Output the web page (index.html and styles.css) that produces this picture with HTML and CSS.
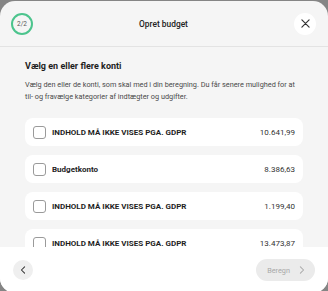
FILE: index.html
```html
<!DOCTYPE html>
<html lang="da">
<head>
<meta charset="UTF-8">
<meta name="viewport" content="width=device-width, initial-scale=1.0">
<title>Opret budget</title>
<link rel="stylesheet" href="styles.css">
</head>
<body>
<div class="modal">
    <header class="modal-header">
        <div class="step">2/2</div>
        <h1 class="modal-title">Opret budget</h1>
        <button class="close-btn" aria-label="Luk">
            <svg width="9" height="9" viewBox="0 0 10 10"><path d="M1 1L9 9M9 1L1 9" stroke="#333" stroke-width="1.3" stroke-linecap="round"/></svg>
        </button>
    </header>

    <!-- Valg af konti -->
    <div class="modal-body">
        <h2 class="section-title">Vælg en eller flere konti</h2>
        <p class="section-text">Vælg den eller de konti, som skal med i din beregning. Du får senere mulighed for at til- og fravælge kategorier af indtægter og udgifter.</p>
        <ul class="account-list">
            <li class="account">
                <span class="check"></span>
                <span class="account-name">INDHOLD MÅ IKKE VISES PGA. GDPR</span>
                <span class="account-amount">10.641,99</span>
            </li>
            <li class="account">
                <span class="check"></span>
                <span class="account-name">Budgetkonto</span>
                <span class="account-amount">8.386,63</span>
            </li>
            <li class="account">
                <span class="check"></span>
                <span class="account-name">INDHOLD MÅ IKKE VISES PGA. GDPR</span>
                <span class="account-amount">1.199,40</span>
            </li>
            <li class="account">
                <span class="check"></span>
                <span class="account-name">INDHOLD MÅ IKKE VISES PGA. GDPR</span>
                <span class="account-amount">13.473,87</span>
            </li>
        </ul>
    </div>

    <footer class="modal-footer">
        <button class="back-btn" aria-label="Tilbage">
            <svg width="6" height="8" viewBox="0 0 6 10"><path d="M5 1L1 5L5 9" fill="none" stroke="#333" stroke-width="1.3" stroke-linecap="round" stroke-linejoin="round"/></svg>
        </button>
        <button class="next-btn" disabled>
            Beregn
            <svg width="6" height="8" viewBox="0 0 6 10"><path d="M1 1L5 5L1 9" fill="none" stroke="#aaa" stroke-width="1.3" stroke-linecap="round" stroke-linejoin="round"/></svg>
        </button>
    </footer>
</div>
</body>
</html>
```
FILE: styles.css
```css
html, body {
    margin: 0;
    padding: 0;
    height: 100%;
    overflow: hidden;
}

body {
    background-color: #858585;
    font-family: Roboto, "Liberation Sans", sans-serif;
    color: #222;
}

.modal {
    margin-top: 1px;
    height: 292px;
    display: flex;
    flex-direction: column;
    background-color: #f5f5f5;
    border-radius: 15px;
    overflow: hidden;
}

.modal-header {
    flex: none;
    height: 45px;
    padding: 0 12px 0 11px;
    display: grid;
    grid-template-columns: 22px 1fr 22px;
    align-items: center;
    border-bottom: 1px solid #e3e3e3;
}

.step {
    width: 18px;
    height: 18px;
    border: 2px solid #4cc48d;
    border-radius: 50%;
    display: flex;
    align-items: center;
    justify-content: center;
    font-size: 6.5px;
    color: #555;
}

.modal-title {
    margin: 0;
    text-align: center;
    font-size: 8.4px;
    font-weight: 500;
    color: #222;
}

.close-btn {
    width: 22px;
    height: 22px;
    padding: 0;
    border: none;
    border-radius: 50%;
    background-color: #fff;
    display: flex;
    align-items: center;
    justify-content: center;
}

.modal-body {
    flex: 1;
    overflow-y: scroll;
    padding: 11px 25px 16px 25px;
}

.modal-body::-webkit-scrollbar {
    width: 7px;
}

.modal-body::-webkit-scrollbar-track {
    background-color: #f5f5f5;
}

.modal-body::-webkit-scrollbar-thumb {
    background-color: #8a8a8a;
    border-radius: 3px;
    border: 1px solid #f5f5f5;
}

.modal-body::-webkit-scrollbar-button:single-button {
    display: block;
    height: 9px;
    background-color: #f5f5f5;
    background-repeat: no-repeat;
    background-position: center;
}

.modal-body::-webkit-scrollbar-button:single-button:vertical:decrement {
    background-image: url("data:image/svg+xml,%3Csvg xmlns='http://www.w3.org/2000/svg' width='5' height='4'%3E%3Cpath d='M0 4L2.5 0L5 4Z' fill='%23888'/%3E%3C/svg%3E");
}

.modal-body::-webkit-scrollbar-button:single-button:vertical:increment {
    background-image: url("data:image/svg+xml,%3Csvg xmlns='http://www.w3.org/2000/svg' width='5' height='4'%3E%3Cpath d='M0 0L2.5 4L5 0Z' fill='%23888'/%3E%3C/svg%3E");
}

.section-title {
    margin: 0 0 5px 0;
    font-size: 9px;
    line-height: 16px;
    font-weight: 700;
    color: #1e1e1e;
}

.section-text {
    margin: 0 0 15px 0;
    font-size: 7.3px;
    line-height: 12px;
    color: #4a4a4a;
}

.account-list {
    list-style: none;
    margin: 0;
    padding: 0;
    display: flex;
    flex-direction: column;
    gap: 9px;
}

.account {
    height: 28px;
    padding: 0 8px;
    background-color: #fff;
    border-radius: 8px;
    display: flex;
    align-items: center;
}

.check {
    width: 11px;
    height: 11px;
    border: 1px solid #9a9a9a;
    border-radius: 3px;
    margin-right: 6px;
    flex: none;
}

.account-name {
    flex: 1;
    font-size: 8px;
    font-weight: 700;
    color: #1e1e1e;
}

.account-amount {
    font-size: 8px;
    color: #333;
}

.modal-footer {
    flex: none;
    height: 46px;
    padding: 0 13px;
    background-color: #fff;
    display: flex;
    align-items: center;
    justify-content: space-between;
}

.back-btn {
    width: 20px;
    height: 20px;
    padding: 0;
    border: none;
    border-radius: 50%;
    background-color: #efefef;
    display: flex;
    align-items: center;
    justify-content: center;
}

.next-btn {
    height: 22px;
    padding: 0 10px 0 11px;
    border: none;
    border-radius: 11px;
    background-color: #ebebeb;
    color: #a8a8a8;
    font-family: Roboto, "Liberation Sans", sans-serif;
    font-size: 7.3px;
    display: flex;
    align-items: center;
    gap: 9px;
}
```
